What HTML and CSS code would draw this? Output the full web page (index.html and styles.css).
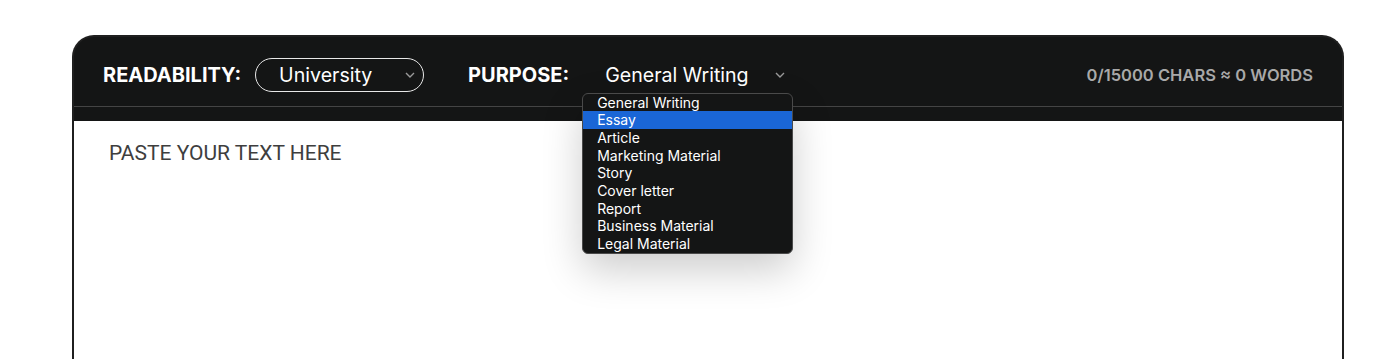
FILE: index.html
```html
<!DOCTYPE html>
<html lang="en">
<head>
    <meta charset="UTF-8">
    <meta name="viewport" content="width=device-width, initial-scale=1.0">
    <title>Readability Checker</title>
    <link rel="stylesheet" href="styles.css">
</head>
<body>

    <div class="card">
        <div class="toolbar">
            <div class="toolbar-row">
                <div class="field">
                    <span class="field-label">READABILITY:</span>
                    <div class="select select-bordered">
                        <span>University</span>
                        <svg class="chevron" width="10" height="6" viewBox="0 0 10 6"><path d="M1 1l4 4 4-4" fill="none" stroke="#9a9a9a" stroke-width="1.4"/></svg>
                    </div>
                </div>

                <div class="field field-purpose">
                    <span class="field-label">PURPOSE:</span>
                    <div class="select-wrap">
                        <div class="select">
                            <span>General Writing</span>
                            <svg class="chevron" width="10" height="6" viewBox="0 0 10 6"><path d="M1 1l4 4 4-4" fill="none" stroke="#9a9a9a" stroke-width="1.4"/></svg>
                        </div>
                        <ul class="menu">
                            <li>General Writing</li>
                            <li class="active">Essay</li>
                            <li>Article</li>
                            <li>Marketing Material</li>
                            <li>Story</li>
                            <li>Cover letter</li>
                            <li>Report</li>
                            <li>Business Material</li>
                            <li>Legal Material</li>
                        </ul>
                    </div>
                </div>

                <div class="counter">0/15000 CHARS &asymp; 0 WORDS</div>
            </div>
        </div>

        <div class="editor">
            <div class="placeholder">PASTE YOUR TEXT HERE</div>
        </div>
    </div>

</body>
</html>
```

FILE: styles.css
```css
body {
    margin: 0;
    padding: 0;
    background-color: #fff;
    font-family: Inter, "Noto Sans", sans-serif;
    overflow: hidden;
}

.card {
    margin: 35px 55px 0 72px;
    border: 2px solid #1f1f1f;
    border-bottom: none;
    border-radius: 22px 22px 0 0;
    background-color: #141515;
    height: 322px;
    display: flex;
    flex-direction: column;
}

.toolbar {
    padding-bottom: 14px;
    border-radius: 22px 22px 0 0;
}

.toolbar-row {
    height: 63px;
    padding: 6px 29px 0 29px;
    display: flex;
    align-items: center;
    border-bottom: 1px solid #444;
}

.field {
    display: flex;
    align-items: center;
    gap: 14px;
}

.field-purpose {
    margin-left: 44px;
}

.field-label {
    color: #fff;
    font-weight: 700;
    font-size: 20px;
}

.select-wrap {
    position: relative;
    margin-left: -1px;
}

.select {
    box-sizing: border-box;
    height: 34px;
    padding: 0 8px 0 23px;
    display: flex;
    align-items: center;
    justify-content: space-between;
    color: #fff;
    font-size: 19.6px;
    width: 211px;
}

.select-bordered {
    width: 169px;
    border: 1.5px solid #e8e8e8;
    border-radius: 17px;
}

.chevron {
    flex: none;
}

.menu {
    position: absolute;
    top: 35px;
    left: 0;
    width: 211px;
    box-sizing: border-box;
    margin: 0;
    padding: 0;
    list-style: none;
    background-color: #141515;
    border: 1px solid #4a4a4a;
    border-radius: 6px;
    box-shadow: 0 16px 40px rgba(0, 0, 0, 0.2);
    z-index: 2;
}

.menu li {
    color: #fff;
    font-size: 14px;
    line-height: 17.7px;
    padding-left: 14px;
}

.menu li.active {
    background-color: #1a66d6;
}

.counter {
    margin-left: auto;
    color: #a9a9a9;
    font-weight: 600;
    font-size: 16.5px;
}

.editor {
    flex: 1;
    background-color: #fff;
    padding: 20px 35px;
}

.placeholder {
    font-family: Roboto, sans-serif;
    font-size: 21px;
    color: #3e3e3e;
}
```
